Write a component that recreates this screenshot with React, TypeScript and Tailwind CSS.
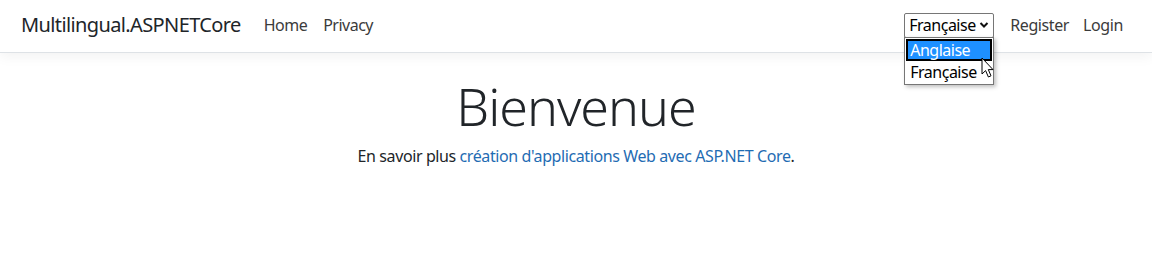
export default function App() {
  const font = { fontFamily: '"Noto Sans", "Open Sans", sans-serif' };
  return (
    <div className="min-h-[254px] bg-white text-[#212529]" style={font}>
      <header className="relative z-10 flex h-[53px] items-center border-b border-[#dee2e6] bg-white pb-[2px] pl-[21px] pr-[21px] shadow-[0_4px_12px_rgba(0,0,0,0.05)]">
        <a className="mr-[15px] text-[20px] leading-none tracking-[-0.62px] text-[#212529]">
          Multilingual.ASPNETCore
        </a>
        <nav className="flex text-[16px] tracking-[-0.5px] text-[#3b3b3b]">
          <a className="px-[8px]">Home</a>
          <a className="px-[8px]">Privacy</a>
        </nav>
        <div className="ml-auto flex items-center">
          <div className="relative mr-[8px]">
            <div className="flex h-[25px] w-[90px] items-center justify-between rounded-[2px] border border-[#767676] bg-white pl-[4px] pr-[4px] text-[16px] leading-none tracking-[-0.5px] text-black">
              <span>Française</span>
              <svg width="10" height="8" viewBox="0 0 10 8">
                <path d="M1.5 2 L5 5.5 L8.5 2" fill="none" stroke="#111" strokeWidth="2" />
              </svg>
            </div>
            <div className="absolute left-0 top-[24px] w-[90px] border border-[#767676] bg-white p-[1px] text-[16px] leading-none tracking-[-0.5px] text-black shadow-[2px_2px_4px_rgba(0,0,0,0.25)]">
              <div className="flex h-[22px] items-center border-2 border-black bg-[#1e90ff] pl-[2px] text-white">
                Anglaise
              </div>
              <div className="flex h-[22px] items-center pl-[4px]">Française</div>
              <svg
                className="absolute left-[76px] top-[19px]"
                width="14"
                height="22"
                viewBox="0 0 14 22"
              >
                <path
                  d="M1 1 L1 17 L4.6 13.6 L7.4 20 L10 18.8 L7.3 12.6 L12 12.6 Z"
                  fill="#fff"
                  stroke="#000"
                  strokeWidth="1"
                  strokeLinejoin="round"
                />
              </svg>
            </div>
          </div>
          <nav className="flex text-[16px] tracking-[-0.4px] text-[#3b3b3b]">
            <a className="pl-[8px] pr-[6px]">Register</a>
            <a className="px-[8px]">Login</a>
          </nav>
        </div>
      </header>
      <main className="flex flex-col items-center pt-[22px]">
        <h1 className="text-[52px] font-light leading-[1.2] tracking-[-1px]">Bienvenue</h1>
        <p className="mt-[7px] text-[16px] tracking-[-0.4px]">
          En savoir plus{" "}
          <a className="text-[#1f6cb3]">création d'applications Web avec ASP.NET Core</a>.
        </p>
      </main>
    </div>
  );
}
